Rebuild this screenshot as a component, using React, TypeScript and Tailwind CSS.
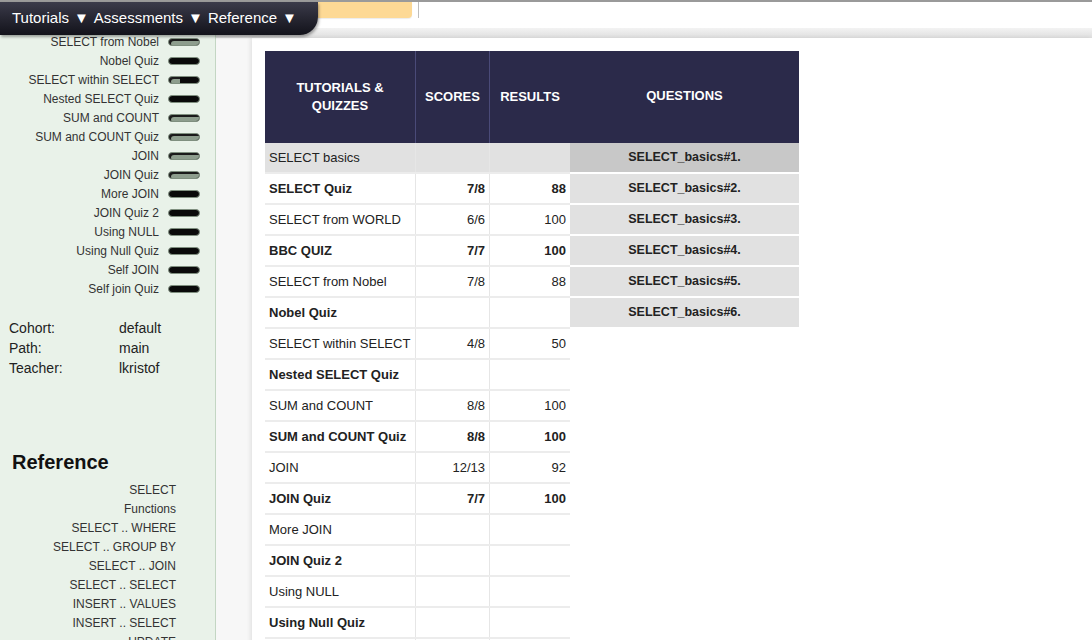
import React from "react";

const sideItems: [string, number][] = [
  ["SELECT from Nobel", 1],
  ["Nobel Quiz", 0],
  ["SELECT within SELECT", 0.35],
  ["Nested SELECT Quiz", 0],
  ["SUM and COUNT", 1],
  ["SUM and COUNT Quiz", 1],
  ["JOIN", 1],
  ["JOIN Quiz", 1],
  ["More JOIN", 0],
  ["JOIN Quiz 2", 0],
  ["Using NULL", 0],
  ["Using Null Quiz", 0],
  ["Self JOIN", 0],
  ["Self join Quiz", 0],
];

const refLinks = [
  "SELECT",
  "Functions",
  "SELECT .. WHERE",
  "SELECT .. GROUP BY",
  "SELECT .. JOIN",
  "SELECT .. SELECT",
  "INSERT .. VALUES",
  "INSERT .. SELECT",
  "UPDATE",
];

const rows: [string, boolean, string, string][] = [
  ["SELECT basics", false, "", ""],
  ["SELECT Quiz", true, "7/8", "88"],
  ["SELECT from WORLD", false, "6/6", "100"],
  ["BBC QUIZ", true, "7/7", "100"],
  ["SELECT from Nobel", false, "7/8", "88"],
  ["Nobel Quiz", true, "", ""],
  ["SELECT within SELECT", false, "4/8", "50"],
  ["Nested SELECT Quiz", true, "", ""],
  ["SUM and COUNT", false, "8/8", "100"],
  ["SUM and COUNT Quiz", true, "8/8", "100"],
  ["JOIN", false, "12/13", "92"],
  ["JOIN Quiz", true, "7/7", "100"],
  ["More JOIN", false, "", ""],
  ["JOIN Quiz 2", true, "", ""],
  ["Using NULL", false, "", ""],
  ["Using Null Quiz", true, "", ""],
  ["Self JOIN", false, "", ""],
];

function Pill({ p }: { p: number }) {
  return (
    <div className="relative h-[8px] w-[32px] shrink-0 overflow-hidden rounded-full border border-[#7f8f7f] bg-[#0a0a0a]">
      {p > 0 && (
        <div
          className="h-full rounded-l-full bg-[#8d9d8d] shadow-[inset_2px_2px_0_#1a1a1a]"
          style={{ width: `${p * 100}%` }}
        />
      )}
    </div>
  );
}

export default function App() {
  return (
    <div className="relative flex h-[640px] w-[1092px] flex-col overflow-hidden bg-white font-['Liberation_Sans',Arial,sans-serif] text-[#222]">
      <div className="h-[2px] w-full shrink-0 bg-[#9a9a9a]" />
      <div className="flex min-h-0 flex-1">
        {/* sidebar */}
        <aside className="flex w-[216px] shrink-0 flex-col border-r border-[#c3d6c3] bg-[#e9f2e9]">
          <div className="flex flex-col pt-[30px]">
            {sideItems.map(([t, p]) => (
              <div key={t} className="flex h-[19px] items-center justify-end gap-[9px] pr-[15px] text-[12px] text-[#333]">
                <span>{t}</span>
                <Pill p={p} />
              </div>
            ))}
          </div>
          <div className="mt-[20px] flex flex-col pl-[9px] text-[14px] leading-[20px] text-[#222]">
            <div className="flex"><span className="w-[110px]">Cohort:</span><span>default</span></div>
            <div className="flex"><span className="w-[110px]">Path:</span><span>main</span></div>
            <div className="flex"><span className="w-[110px]">Teacher:</span><span>lkristof</span></div>
          </div>
          <h2 className="mt-[72px] pl-[12px] text-[20px] font-bold leading-[24px] text-[#111]">Reference</h2>
          <div className="mt-[6px] flex w-[176px] flex-col items-end text-[12px] text-[#333]">
            {refLinks.map((l) => (
              <div key={l} className="flex h-[19px] items-center">{l}</div>
            ))}
          </div>
        </aside>

        {/* main */}
        <main className="flex min-w-0 flex-1 flex-col bg-[#f7f7f7]">
          <div className="flex h-[26px] shrink-0 items-start bg-white">
            <div className="ml-[40px] h-[16px] w-[156px] rounded-br-[4px] bg-[#fdd995] shadow-[0_1px_1px_rgba(0,0,0,0.08)]" />
            <div className="ml-[6px] h-[16px] w-px bg-[#bdbdbd]" />
          </div>
          <div className="h-[10px] shrink-0 bg-gradient-to-b from-[#f3f3f3] to-[#dedede]" />
          <div className="ml-[36px] flex-1 bg-white pl-[13px] pt-[13px] shadow-[-2px_0_4px_rgba(0,0,0,0.08)]">
            <div className="flex">
              {/* main table */}
              <div className="flex w-[305px] flex-col">
                <div className="flex h-[92px] bg-[#2b2a4a] text-[13px] font-bold text-white">
                  <div className="flex w-[151px] items-center justify-center border-r border-[#4a4a78] text-center leading-[18px]">
                    TUTORIALS &amp;<br />QUIZZES
                  </div>
                  <div className="flex w-[74px] items-center justify-center border-r border-[#4a4a78]">SCORES</div>
                  <div className="flex w-[80px] items-center justify-center">RESULTS</div>
                </div>
                {rows.map(([name, bold, s, r], i) => (
                  <div
                    key={name}
                    className={`flex h-[31px] border-b-2 border-[#ececec] text-[13px] ${i === 0 ? "bg-[#e1e1e1]" : "bg-white"} ${bold ? "font-bold" : ""}`}
                  >
                    <div className="flex w-[151px] items-center border-r border-[#e6e6e6] pl-[4px]">{name}</div>
                    <div className="flex w-[74px] items-center justify-end border-r border-[#e6e6e6] pr-[4px]">{s}</div>
                    <div className="flex w-[80px] items-center justify-end pr-[4px]">{r}</div>
                  </div>
                ))}
              </div>
              {/* questions */}
              <div className="flex w-[229px] flex-col">
                <div className="flex h-[92px] items-center justify-center bg-[#2b2a4a] pb-[2px] text-[13px] font-bold text-white">
                  QUESTIONS
                </div>
                {[1, 2, 3, 4, 5, 6].map((n) => (
                  <div
                    key={n}
                    className={`flex h-[31px] items-center justify-center border-b-2 border-white text-[12.5px] font-bold text-[#222] ${n === 1 ? "bg-[#c8c8c8]" : "bg-[#e1e1e1]"}`}
                  >
                    SELECT_basics#{n}.
                  </div>
                ))}
              </div>
            </div>
          </div>
        </main>
      </div>

      {/* top menu */}
      <nav className="absolute left-0 top-[2px] flex h-[33px] w-[318px] items-center gap-[5px] rounded-br-[18px] bg-gradient-to-b from-[#3b3b4a] to-[#13131b] pl-[12px] text-[15px] text-white shadow-[1px_2px_3px_rgba(0,0,0,0.35)]">
        <span>Tutorials</span>
        <span className="text-[15px]">▼</span>
        <span>Assessments</span>
        <span className="text-[15px]">▼</span>
        <span>Reference</span>
        <span className="text-[15px]">▼</span>
      </nav>
    </div>
  );
}
